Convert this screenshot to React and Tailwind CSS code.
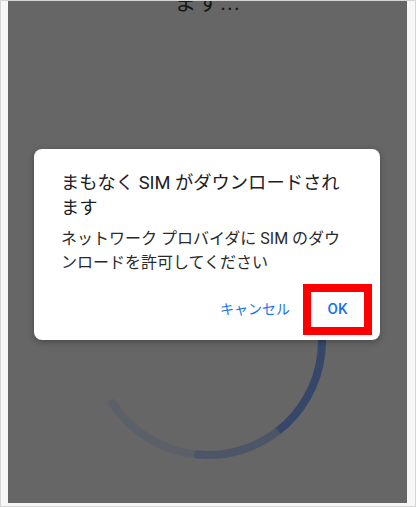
import React from "react";

const font = { fontFamily: '"Roboto", "Noto Sans CJK JP", sans-serif' };

function Spinner() {
  const cx = 120;
  const cy = 120;
  const r = 114;
  const pt = (deg) => {
    const a = (deg * Math.PI) / 180;
    return [cx + r * Math.cos(a), cy + r * Math.sin(a)];
  };
  const arc = (from, to) => {
    const [x1, y1] = pt(from);
    const [x2, y2] = pt(to);
    const large = to - from > 180 ? 1 : 0;
    return `M ${x1} ${y1} A ${r} ${r} 0 ${large} 1 ${x2} ${y2}`;
  };
  return (
    <svg width="240" height="240" viewBox="0 0 240 240" className="mt-[204px] shrink-0">
      <path d={arc(95, 147)} stroke="#5c6069" strokeWidth="8" fill="none" strokeLinecap="round" />
      <path d={arc(52, 95)} stroke="#4d5568" strokeWidth="8" fill="none" strokeLinecap="round" />
      <path d={arc(-40, 52)} stroke="#37476a" strokeWidth="8" fill="none" />
    </svg>
  );
}

export default function App() {
  return (
    <div
      className="w-[416px] h-[507px] border border-[#d6d6d6] bg-[#f7f7f7] pl-[7px] pr-[8px] pb-[3px] overflow-hidden"
      style={font}
    >
      <div className="relative w-full h-full bg-[#666666] overflow-hidden flex flex-col items-center">
        <p className="text-[22px] leading-[28px] text-[#161616] -mt-[12px] tracking-[1px]">ます...</p>
        <Spinner />

        {/* dialog */}
        <div className="absolute left-[26px] top-[148px] w-[346px] h-[191px] bg-white rounded-[8px] shadow-[0_2px_6px_rgba(0,0,0,0.3)] flex flex-col pl-[27px] pr-[8px] pt-[21px] pb-[5px]">
          <h2 className="text-[18.3px] leading-[25px] text-[#202124] pr-[18px]">
            まもなく SIM がダウンロードされます
          </h2>
          <p className="mt-[7px] text-[16px] leading-[24px] text-[#2a2a2a] pr-[20px]">
            ネットワーク プロバイダに SIM のダウンロードを許可してください
          </p>
          <div className="mt-auto flex items-center justify-end gap-[13px]">
            <span className="text-[14px] text-[#1a73e8]">キャンセル</span>
            <button className="w-[69px] h-[51px] border-[8px] border-[#ff0000] flex items-center justify-center text-[15px] text-[#1a73e8] font-medium">
              OK
            </button>
          </div>
        </div>
      </div>
    </div>
  );
}
